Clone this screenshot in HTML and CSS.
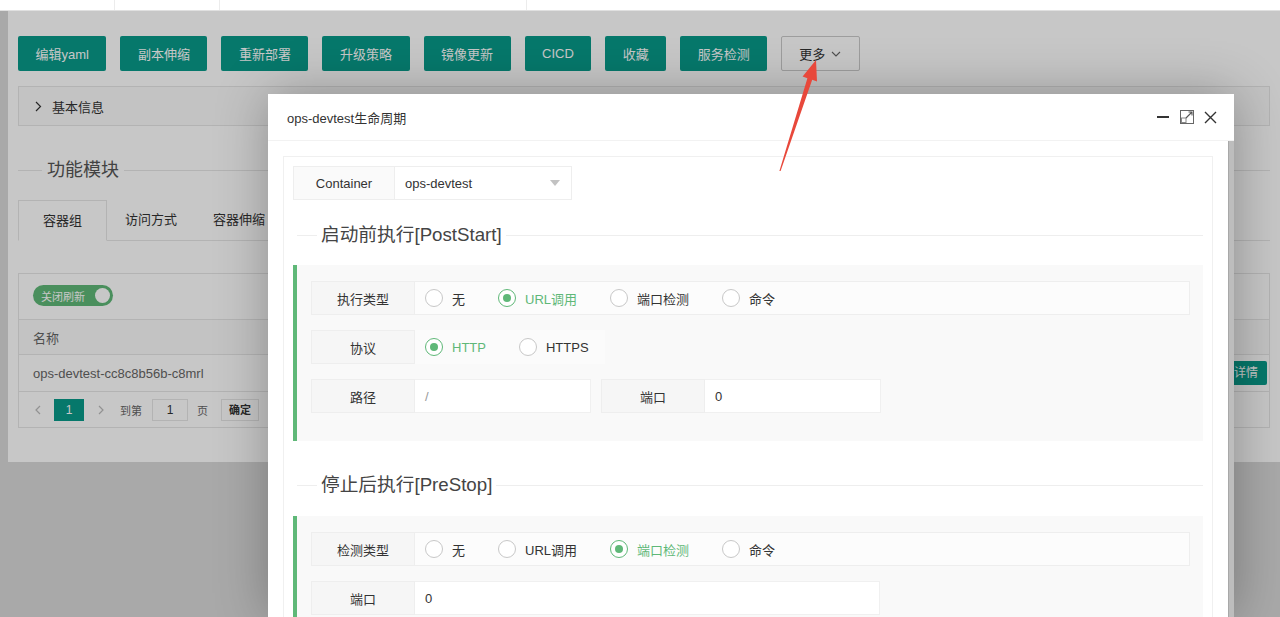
FILE: index.html
```html
<!DOCTYPE html>
<html lang="zh-CN">
<head>
<meta charset="utf-8">
<title>ops-devtest生命周期</title>
<link rel="stylesheet" href="styles.css">
</head>
<body>
<div class="topbar"><span class="t1"></span><span class="t2"></span><span class="t3"></span></div>

<div class="card">
  <div class="toolbar">
    <button class="btn">编辑yaml</button>
    <button class="btn">副本伸缩</button>
    <button class="btn">重新部署</button>
    <button class="btn">升级策略</button>
    <button class="btn">镜像更新</button>
    <button class="btn">CICD</button>
    <button class="btn">收藏</button>
    <button class="btn">服务检测</button>
    <button class="btn btn-more">更多<svg width="10" height="6" viewBox="0 0 10 6"><path d="M1 1l4 4 4-4" fill="none" stroke="#666" stroke-width="1.1"/></svg></button>
  </div>
  <div class="collapse"><svg width="7" height="11" viewBox="0 0 7 11"><path d="M1 1l4.5 4.5L1 10" fill="none" stroke="#333" stroke-width="1.2"/></svg>基本信息</div>
  <div class="legend"><span>功能模块</span></div>
  <ul class="tabs">
    <li class="active">容器组</li>
    <li>访问方式</li>
    <li>容器伸缩</li>
  </ul>
  <div class="tbl">
    <div class="tbl-top"><span class="switch">关闭刷新<i></i></span></div>
    <div class="tbl-head">名称</div>
    <div class="tbl-row"><span>ops-devtest-cc8c8b56b-c8mrl</span><span class="btn-xs">详情</span></div>
    <div class="tbl-pager">
      <span class="pg-arrow pg-prev"><svg width="6" height="10" viewBox="0 0 6 10"><path d="M5 1L1 5l4 4" fill="none" stroke="#bbb" stroke-width="1.2"/></svg></span>
      <span class="pg-cur">1</span>
      <span class="pg-arrow pg-next"><svg width="6" height="10" viewBox="0 0 6 10"><path d="M1 1l4 4-4 4" fill="none" stroke="#bbb" stroke-width="1.2"/></svg></span>
      <span class="pg-txt pg-to">到第</span>
      <span class="pg-input">1</span>
      <span class="pg-txt pg-page">页</span>
      <span class="pg-ok">确定</span>
    </div>
  </div>
</div>

<div class="mask"></div>

<div class="modal">
  <div class="modal-head">
    <span class="modal-title">ops-devtest生命周期</span>
    <div class="modal-tools">
      <svg width="14" height="14" viewBox="0 0 14 14"><path d="M1 7h12" stroke="#333" stroke-width="2"/></svg>
      <svg width="14" height="14" viewBox="0 0 14 14"><rect x="0.5" y="0.5" width="13" height="13" fill="none" stroke="#666"/><rect x="1.5" y="8" width="4.5" height="4.5" fill="none" stroke="#888"/><path d="M6 8l6-6M8.5 2H12v3.5" fill="none" stroke="#555" stroke-width="1.1"/></svg>
      <svg width="13" height="13" viewBox="0 0 13 13"><path d="M1 1l11 11M12 1L1 12" stroke="#333" stroke-width="1.4"/></svg>
    </div>
  </div>
  <div class="modal-body">
    <div class="modal-scroll">
      <div class="panel">
        <div class="select-row">
          <label class="lbl">Container</label>
          <div class="select"><span>ops-devtest</span><i class="caret"></i></div>
        </div>

        <div class="legend legend-m"><span>启动前执行[PostStart]</span></div>
        <div class="block">
          <div class="row">
            <label class="lbl">执行类型</label>
            <div class="field">
              <span class="radio"><i></i>无</span>
              <span class="radio on"><i></i>URL调用</span>
              <span class="radio"><i></i>端口检测</span>
              <span class="radio"><i></i>命令</span>
            </div>
          </div>
          <div class="row">
            <label class="lbl">协议</label>
            <div class="field plain">
              <span class="radio on"><i></i>HTTP</span>
              <span class="radio"><i></i>HTTPS</span>
            </div>
          </div>
          <div class="row">
            <div class="pair"><label class="lbl">路径</label><div class="input muted">/</div></div>
            <div class="pair"><label class="lbl">端口</label><div class="input">0</div></div>
          </div>
        </div>

        <div class="legend legend-m legend-m2"><span>停止后执行[PreStop]</span></div>
        <div class="block">
          <div class="row">
            <label class="lbl">检测类型</label>
            <div class="field">
              <span class="radio"><i></i>无</span>
              <span class="radio"><i></i>URL调用</span>
              <span class="radio on"><i></i>端口检测</span>
              <span class="radio"><i></i>命令</span>
            </div>
          </div>
          <div class="row">
            <div class="pair pair-wide"><label class="lbl">端口</label><div class="input">0</div></div>
          </div>
        </div>
      </div>
    </div>
    <div class="scrollbar"></div>
  </div>
</div>

<svg class="arrow" width="1280" height="617" viewBox="0 0 1280 617"><polygon points="780.6,171 812.2,79.8 817,81.6 816,60 802.6,76.6 807.4,78.2 779.4,171" fill="#e8483b"/></svg>
</body>
</html>
```

FILE: styles.css
```css
* { box-sizing: border-box; }
html, body { margin: 0; height: 100%; overflow: hidden; }
body {
  font-family: "Liberation Sans", "Noto Sans CJK SC", sans-serif;
  font-size: 13px;
  color: #333;
  background: #d9d9d9;
  position: relative;
}

.topbar {
  height: 11px;
  background: #fff;
  border-bottom: 1px solid #e0e0e0;
  display: flex;
  position: relative;
  z-index: 15;
}
.topbar span { height: 10px; border-right: 1px solid #ececec; }
.topbar .t1 { width: 115px; }
.topbar .t2 { width: 105px; }
.topbar .t3 { width: 307px; }

.card {
  margin-left: 8px;
  width: 1272px;
  background: #fff;
  padding: 25px 10px 34px;
}

.toolbar { display: flex; gap: 14px; }
.btn {
  height: 35px;
  padding: 0 17.5px;
  border: 0;
  border-radius: 2px;
  background: #089a8a;
  color: #fff;
  font-family: inherit;
  font-size: 13px;
  display: inline-flex;
  align-items: center;
}
.btn-more {
  background: #fff;
  color: #333;
  border: 1px solid #c9c9c9;
  padding: 0 18px 0 17px;
}
.btn-more svg { margin-left: 6px; }

.collapse {
  margin-top: 15px;
  height: 40px;
  border: 1px solid #e6e6e6;
  background: #fafafa;
  display: flex;
  align-items: center;
  padding-left: 16px;
}
.collapse svg { margin-right: 10px; }

.legend {
  margin-top: 32px;
  display: flex;
  align-items: center;
  height: 24px;
}
.legend::before { content: ""; width: 24px; height: 1px; background: #e6e6e6; }
.legend::after { content: ""; flex: 1; height: 1px; background: #e6e6e6; }
.legend span { padding: 0 5px; font-size: 18px; line-height: 24px; color: #555; }

.legend-m { margin: 22px 0 17px; height: 26px; }
.legend-m2 { margin: 31px 0 18px; }
.legend-m::before { width: 20px; margin-left: 4px; background: #eee; }
.legend-m::after { background: #eee; }
.legend-m span { padding: 0 4px; font-size: 18.7px; color: #444; line-height: 26px; }

.tabs {
  margin: 18px 0 0;
  padding: 0;
  list-style: none;
  display: flex;
  height: 41px;
  border-bottom: 1px solid #e6e6e6;
}
.tabs li { padding: 0 18px; line-height: 40px; }
.tabs li.active {
  width: 89px;
  padding: 0;
  text-align: center;
  height: 41px;
  line-height: 39px;
  border: 1px solid #e6e6e6;
  border-bottom-color: #fff;
  background: #fff;
}

.tbl { margin-top: 32px; border: 1px solid #e6e6e6; }
.tbl-top { height: 45px; padding: 11px 14px 0; }
.switch {
  display: inline-flex;
  align-items: center;
  justify-content: space-between;
  width: 80px;
  height: 21px;
  border-radius: 11px;
  background: #5fb878;
  color: #fff;
  font-size: 11px;
  padding: 0 3px 0 8px;
}
.switch i { width: 15px; height: 15px; border-radius: 50%; background: #fff; }
.tbl-head {
  height: 35px;
  border-top: 1px solid #e6e6e6;
  background: #fafafa;
  display: flex;
  align-items: center;
  padding-left: 14px;
  color: #666;
}
.tbl-row {
  height: 37px;
  border-top: 1px solid #e6e6e6;
  display: flex;
  align-items: center;
  justify-content: space-between;
  padding: 0 2px 0 14px;
  color: #666;
}
.btn-xs {
  height: 24px;
  line-height: 24px;
  padding: 0 9px;
  background: #089a8a;
  color: #fff;
  font-size: 12px;
  border-radius: 2px;
}
.tbl-pager {
  height: 36px;
  border-top: 1px solid #e6e6e6;
  display: flex;
  align-items: center;
  font-size: 11px;
  color: #666;
}
.pg-arrow { width: 10px; display: flex; justify-content: center; }
.pg-prev { margin-left: 14px; }
.pg-cur {
  margin-left: 11px;
  width: 30px;
  height: 22px;
  line-height: 22px;
  text-align: center;
  background: #089a8a;
  color: #fff;
  font-size: 12px;
}
.pg-next { margin-left: 12px; }
.pg-to { margin-left: 14px; }
.pg-input {
  margin-left: 10px;
  width: 36px;
  height: 22px;
  line-height: 20px;
  text-align: center;
  border: 1px solid #e6e6e6;
  color: #333;
  font-size: 12px;
}
.pg-page { margin-left: 9px; }
.pg-ok {
  margin-left: 13px;
  width: 38px;
  height: 22px;
  line-height: 20px;
  text-align: center;
  border: 1px solid #e6e6e6;
  color: #333;
  font-weight: bold;
}

.mask {
  position: absolute;
  left: 0;
  right: 0;
  top: 11px;
  bottom: 0;
  background: rgba(0, 0, 0, 0.22);
  z-index: 10;
}

.modal {
  position: absolute;
  left: 268px;
  top: 94px;
  width: 966px;
  height: 523px;
  background: #fff;
  z-index: 20;
  box-shadow: 1px 1px 50px rgba(0, 0, 0, 0.3);
  display: flex;
  flex-direction: column;
  overflow: hidden;
}
.modal-head {
  height: 47px;
  flex: none;
  display: flex;
  align-items: center;
  justify-content: space-between;
  padding: 0 17px 0 19px;
  border-bottom: 1px solid #f2f2f2;
}
.modal-title { font-size: 13px; color: #333; }
.modal-tools { display: flex; align-items: center; gap: 10px; }
.modal-body { flex: 1; display: flex; min-height: 0; }
.modal-scroll { flex: 1; padding: 15px; overflow: hidden; }
.scrollbar { width: 6px; background: #bdbdbd; border-left: 1px solid #a8a8a8; }

.panel { border: 1px solid #f0f0f0; padding: 9px; min-height: 600px; }

.select-row { display: flex; width: 279px; height: 34px; }
.lbl {
  width: 104px;
  flex: none;
  display: flex;
  align-items: center;
  justify-content: center;
  background: #f6f6f6;
  border: 1px solid #eeeeee;
  color: #333;
}
.select-row .lbl { width: 102px; background: #fafafa; }
.select {
  flex: 1;
  display: flex;
  align-items: center;
  justify-content: space-between;
  padding: 0 11px 0 10px;
  border: 1px solid #eeeeee;
  border-left: 0;
  background: #fff;
}
.caret {
  width: 0;
  height: 0;
  border-top: 6px solid #c2c2c2;
  border-left: 5px solid transparent;
  border-right: 5px solid transparent;
}

.block {
  border-left: 4px solid #5fb878;
  background: #f9f9f9;
  padding: 16px 13px 28px 14px;
}
.row { display: flex; height: 34px; margin-bottom: 15px; gap: 10px; }
.row:last-child { margin-bottom: 0; }
.field {
  flex: 1;
  display: flex;
  align-items: center;
  padding-left: 10px;
  border: 1px solid #eeeeee;
  border-left: 0;
  background: #fcfcfc;
  margin-left: -10px;
}
.field.plain { flex: none; width: 190px; border-color: transparent; background: #fbfbfb; }
.radio {
  display: inline-flex;
  align-items: center;
  margin-right: 33px;
  color: #333;
}
.radio i {
  width: 18px;
  height: 18px;
  border-radius: 50%;
  border: 1px solid #c8c8c8;
  background: #fff;
  margin-right: 9px;
  display: flex;
  align-items: center;
  justify-content: center;
}
.radio.on { color: #5fb878; }
.radio.on i { border-color: #5fb878; }
.radio.on i::after {
  content: "";
  width: 8px;
  height: 8px;
  border-radius: 50%;
  background: #5fb878;
}

.pair { display: flex; width: 280px; }
.pair-wide { width: 569px; }
.input {
  flex: 1;
  display: flex;
  align-items: center;
  padding-left: 10px;
  background: #fff;
  border: 1px solid #f0f0f0;
  border-left: 0;
  color: #333;
}
.input.muted { color: #999; }

.arrow {
  position: absolute;
  left: 0;
  top: 0;
  z-index: 30;
  pointer-events: none;
}
```
